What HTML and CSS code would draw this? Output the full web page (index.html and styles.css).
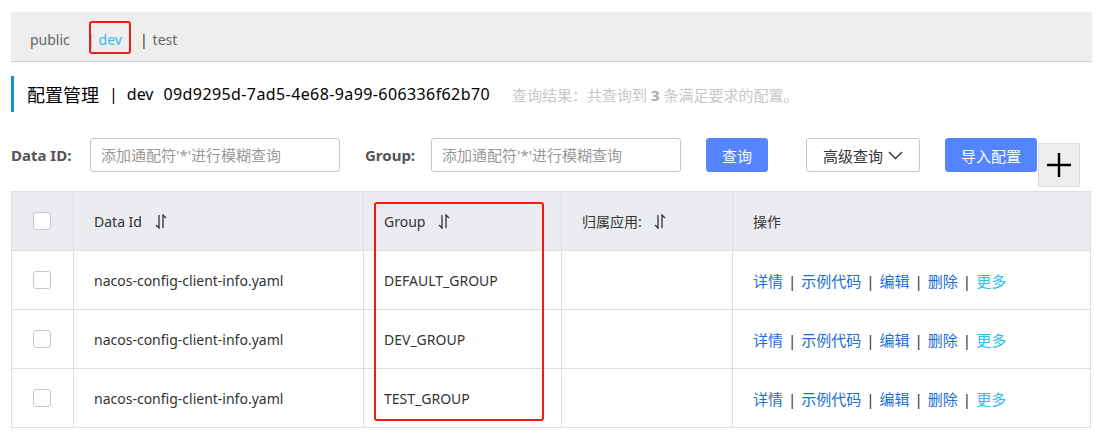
FILE: index.html
```html
<!DOCTYPE html>
<html lang="zh-CN">
<head>
	<meta charset="UTF-8">
	<title>配置管理</title>
	<link rel="stylesheet" href="styles.css">
</head>
<body>
<div class="page">
	<div class="ns-bar">
		<span class="ns-item">public</span>
		<span class="ns-sep">|</span>
		<span class="ns-item ns-on">dev<span class="mark mark-dev"></span></span>
		<span class="ns-sep">|</span>
		<span class="ns-item">test</span>
	</div>

	<div class="title">
		<span class="title-cn">配置管理</span>
		<span class="title-sep">|</span>
		<span class="title-ns">dev</span>
		<span class="title-id">09d9295d-7ad5-4e68-9a99-606336f62b70</span>
		<span class="title-sub">查询结果：共查询到 <b>3</b> 条满足要求的配置。</span>
	</div>

	<div class="search">
		<label class="search-label">Data ID:</label>
		<input class="search-input" type="text" placeholder="添加通配符'*'进行模糊查询">
		<label class="search-label label-group">Group:</label>
		<input class="search-input" type="text" placeholder="添加通配符'*'进行模糊查询">
		<button class="btn btn-primary btn-query">查询</button>
		<button class="btn btn-normal btn-adv">高级查询
			<svg width="15" height="10" viewBox="0 0 15 10"><path d="M1 2 L7.5 8.5 L14 2" fill="none" stroke="#333" stroke-width="1.4"/></svg>
		</button>
		<button class="btn btn-primary btn-import">导入配置</button>
		<div class="plus-box">
			<svg width="26" height="26" viewBox="0 0 26 26"><path d="M13 1 V25 M1 13 H25" stroke="#000" stroke-width="2.4"/></svg>
		</div>
	</div>

	<div class="table-wrap">
		<table class="cfg-table">
			<colgroup>
				<col style="width:62px">
				<col style="width:290px">
				<col style="width:198px">
				<col style="width:171px">
				<col>
			</colgroup>
			<thead>
				<tr>
					<th class="cell-check"><span class="checkbox"></span></th>
					<th>Data Id <svg class="sort" width="12" height="15" viewBox="0 0 12 15"><path d="M4 1 V14 L1 11 M8 14 V1 L11 4" fill="none" stroke="#333" stroke-width="1.3"/></svg></th>
					<th>Group <svg class="sort" width="12" height="15" viewBox="0 0 12 15"><path d="M4 1 V14 L1 11 M8 14 V1 L11 4" fill="none" stroke="#333" stroke-width="1.3"/></svg></th>
					<th>归属应用: <svg class="sort" width="12" height="15" viewBox="0 0 12 15"><path d="M4 1 V14 L1 11 M8 14 V1 L11 4" fill="none" stroke="#333" stroke-width="1.3"/></svg></th>
					<th>操作</th>
				</tr>
			</thead>
			<tbody>
				<tr>
					<td class="cell-check"><span class="checkbox"></span></td>
					<td>nacos-config-client-info.yaml</td>
					<td>DEFAULT_GROUP</td>
					<td></td>
					<td class="ops"><a>详情</a><i>|</i><a>示例代码</a><i>|</i><a>编辑</a><i>|</i><a>删除</a><i>|</i><a class="more">更多</a></td>
				</tr>
				<tr>
					<td class="cell-check"><span class="checkbox"></span></td>
					<td>nacos-config-client-info.yaml</td>
					<td>DEV_GROUP</td>
					<td></td>
					<td class="ops"><a>详情</a><i>|</i><a>示例代码</a><i>|</i><a>编辑</a><i>|</i><a>删除</a><i>|</i><a class="more">更多</a></td>
				</tr>
				<tr>
					<td class="cell-check"><span class="checkbox"></span></td>
					<td>nacos-config-client-info.yaml</td>
					<td>TEST_GROUP</td>
					<td></td>
					<td class="ops"><a>详情</a><i>|</i><a>示例代码</a><i>|</i><a>编辑</a><i>|</i><a>删除</a><i>|</i><a class="more">更多</a></td>
				</tr>
			</tbody>
		</table>
		<div class="mark mark-group"></div>
	</div>
</div>
</body>
</html>
```

FILE: styles.css
```css
body{
	margin: 0;
	background: #fff;
	font-family: "Noto Sans", "Noto Sans CJK SC", sans-serif;
	font-size: 14px;
	color: #333;
}
.page{
	padding: 12px 3px 0 11px;
}

/* namespace bar */
.ns-bar{
	height: 50px;
	background: #eee;
	border-bottom: 1px solid #ccc;
	display: flex;
	align-items: center;
	padding: 5px 0 0 19px;
	box-sizing: border-box;
	color: #666;
}
.ns-item{
	position: relative;
}
.ns-sep{
	margin: 0 4px 0 17px;
	color: #333;
}
.ns-on{
	color: #33bde6;
	margin-right: 18px;
}
.ns-on + .ns-sep{
	margin-left: 0;
	margin-right: 5px;
}
.mark{
	position: absolute;
	border: 2px solid #f01c14;
	border-radius: 3px;
}
.mark-dev{
	left: -10px;
	top: -9px;
	width: 38px;
	height: 29px;
}

/* title */
.title{
	margin-top: 14px;
	height: 36px;
	border-left: 3px solid #1296cb;
	display: flex;
	align-items: center;
	padding-left: 13px;
	color: #000;
	font-size: 16px;
}
.title-cn{
	font-size: 18px;
}
.title-sep{
	margin: 0 9px 0 10px;
}
.title-ns{
	margin-right: 10px;
}
.title-id{
	letter-spacing: 0.4px;
}
.title-sub{
	margin-left: 22px;
	color: #c8c8c8;
	font-size: 15px;
}
.title-sub b{
	color: #aaa;
}

/* search row */
.search{
	margin-top: 26px;
	display: flex;
	align-items: flex-start;
	height: 34px;
}
.search-label{
	font-weight: bold;
	color: #555;
	line-height: 34px;
	width: 79px;
	font-size: 15px;
}
.label-group{
	margin-left: 25px;
	width: 66px;
}
.search-input{
	width: 250px;
	height: 34px;
	box-sizing: border-box;
	border: 1px solid #c4c6cf;
	border-radius: 3px;
	padding: 0 10px;
	font-family: inherit;
	font-size: 15px;
}
.search-input::placeholder{
	color: #999;
}
.btn{
	height: 34px;
	box-sizing: border-box;
	border-radius: 3px;
	font-family: inherit;
	font-size: 15px;
	padding: 0;
}
.btn-primary{
	background: #5584ff;
	border: 1px solid #5584ff;
	color: #fff;
}
.btn-normal{
	background: #fff;
	border: 1px solid #c4c6cf;
	color: #333;
}
.btn-query{
	margin-left: 25px;
	width: 62px;
}
.btn-adv{
	margin-left: 38px;
	width: 114px;
	display: flex;
	align-items: center;
	justify-content: center;
	gap: 5px;
}
.btn-import{
	margin-left: 25px;
	width: 92px;
}
.plus-box{
	margin: 5px 0 0 1px;
	width: 42px;
	height: 44px;
	box-sizing: border-box;
	background: #eee;
	border: 1px solid #ddd;
	display: flex;
	align-items: center;
	justify-content: center;
}

/* table */
.table-wrap{
	position: relative;
	margin-top: 19px;
	width: 1080px;
}
.cfg-table{
	width: 1080px;
	border-collapse: collapse;
	table-layout: fixed;
}
.cfg-table th,
.cfg-table td{
	height: 58px;
	border: 1px solid #dcdee3;
	padding: 0 0 0 20px;
	text-align: left;
	font-weight: normal;
	color: #333;
}
.cfg-table th{
	background: #ebecf0;
}
.cfg-table .cell-check{
	padding-left: 21px;
}
.checkbox{
	display: block;
	width: 18px;
	height: 18px;
	box-sizing: border-box;
	border: 1px solid #c4c6cf;
	border-radius: 3px;
	background: #fff;
}
.sort{
	vertical-align: -2px;
	margin-left: 9px;
}
.ops{
	font-size: 15px;
}
.ops a{
	color: #1a6fd6;
}
.ops i{
	font-style: normal;
	color: #333;
	margin: 0 5px;
}
.ops .more{
	color: #2cc0e8;
}
.mark-group{
	left: 363px;
	top: 11px;
	width: 166px;
	height: 215px;
}
```
